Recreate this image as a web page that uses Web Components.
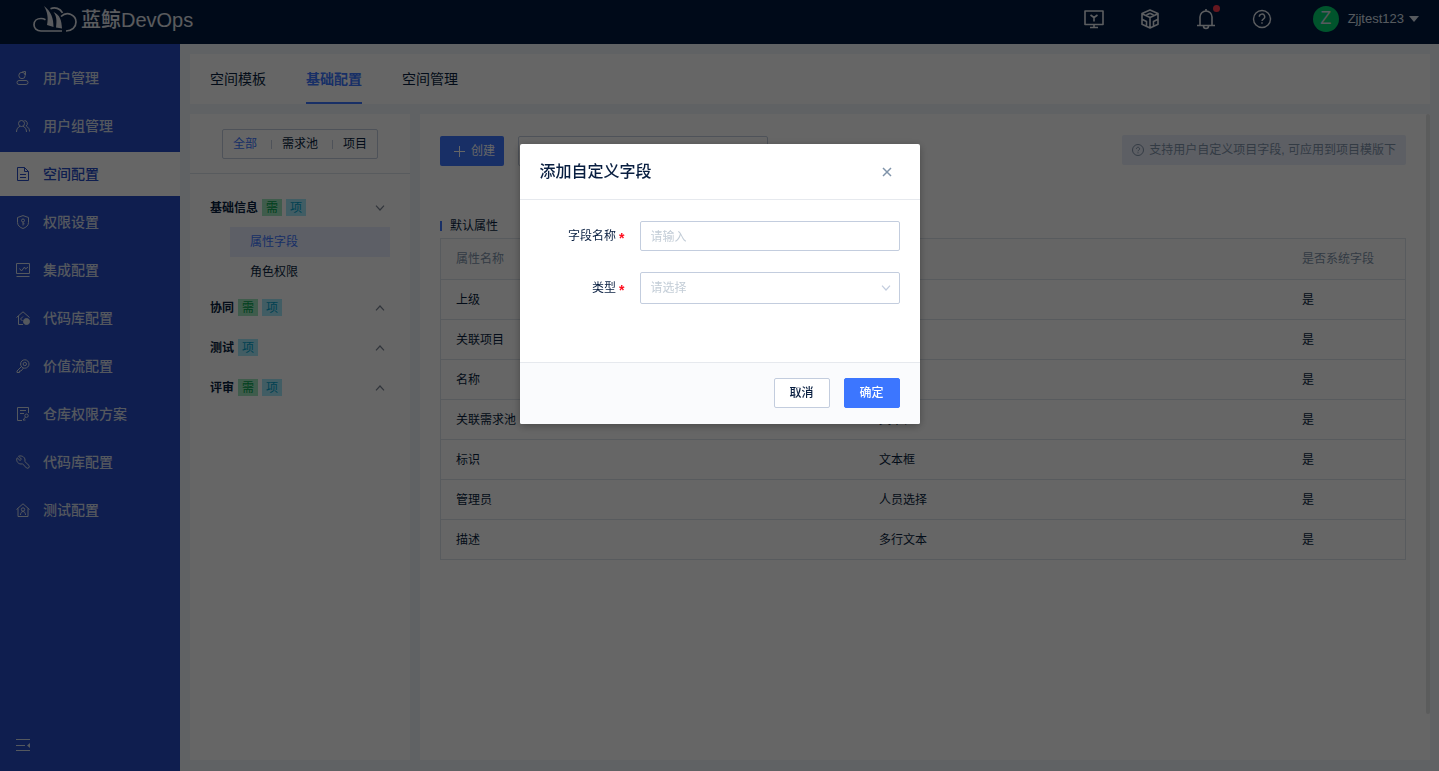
<!DOCTYPE html>
<html lang="zh-CN">
<head>
<meta charset="utf-8">
<title>蓝鲸DevOps</title>
<style>
html,body{margin:0;height:100%}
body{font-family:"Liberation Sans","Noto Sans CJK SC",sans-serif;font-size:12px;line-height:20px;color:#081e40;background:#f0f5fa;
--primary:#3c76ff;--line:#dde4eb;--muted:#8094aa;--field:#c3cdde}
</style>
</head>
<body>
<app-shell>
  <top-bar slot="top" user="Zjjtest123"></top-bar>
  <side-nav slot="side">
    <nav-item icon="user">用户管理</nav-item>
    <nav-item icon="group">用户组管理</nav-item>
    <nav-item icon="doc" active>空间配置</nav-item>
    <nav-item icon="shield">权限设置</nav-item>
    <nav-item icon="chart">集成配置</nav-item>
    <nav-item icon="home">代码库配置</nav-item>
    <nav-item icon="key">价值流配置</nav-item>
    <nav-item icon="plan">仓库权限方案</nav-item>
    <nav-item icon="wrench">代码库配置</nav-item>
    <nav-item icon="house">测试配置</nav-item>
  </side-nav>
  <tab-bar></tab-bar>
  <split-view>
    <group-panel slot="aside">
      <group-section label="基础信息" tags="需,项" open>
        <group-link active>属性字段</group-link>
        <group-link>角色权限</group-link>
      </group-section>
      <group-section label="协同" tags="需,项"></group-section>
      <group-section label="测试" tags="项"></group-section>
      <group-section label="评审" tags="需,项"></group-section>
    </group-panel>
    <field-panel><field-table></field-table></field-panel>
  </split-view>
</app-shell>
<modal-dialog heading="添加自定义字段">
  <form-row label="字段名称" for="text"></form-row>
  <form-row label="类型" for="select"></form-row>
</modal-dialog>

<script>
const define = (name, html, setup) => customElements.define(name, class extends HTMLElement {
  connectedCallback() {
    if (this.shadowRoot) return;
    const t = document.createElement('template');
    t.innerHTML = typeof html === 'function' ? html(this) : html;
    this.attachShadow({mode: 'open'}).append(t.content.cloneNode(true));
    if (setup) setup(this);
  }
});
const base = '*{box-sizing:border-box}button,input,select{font:inherit;color:inherit;margin:0}button{cursor:pointer;border:0;padding:0;background:none}a{color:inherit;text-decoration:none}svg{display:block;flex:none;fill:none;stroke:currentColor}';

const icons = {
  user: '<circle cx="6" cy="4.500" r="3.200"/><path d="M6 1.200C7 .5 8 .5 9.500.5V4M3 9.500h7a2 2 0 0 1 0 4H3a2 2 0 0 1 0-4z"/>',
  group: '<circle cx="5.500" cy="4.500" r="3"/><path d="M.5 13c0-3 1.500-5 3.500-5.700M7 7.300c2 .7 3.500 2.700 3.500 5.700M8.500 1.500a3 3 0 0 1 1.500 5.500M10.500 7.500c2 .8 3 2.500 3 5"/>',
  doc: '<path d="M1.500.5h7l4 4v9h-11zM8.500.5v4h4M4 7.500h6M4 10.500h6"/>',
  shield: '<path d="M7 .6 12.500 2.500v5c0 3-2.500 5-5.500 6-3-1-5.500-3-5.500-6v-5z"/><circle cx="7" cy="5.500" r="1.500"/><path d="M7 7v3.500M7 8.800h1.500"/>',
  chart: '<path d="M.5.500h13v10H.5zM.5 13.500h13M3.500 5.500l2 2.500 3-4 1 2 2.500-2"/>',
  home: '<path d="M.5 6.500 7 .8l6.500 5.700M2.500 5v8.500H7M7 5.500 4.500 8 6.500 10"/><circle cx="10.500" cy="10.500" r="3" fill="currentColor"/>',
  key: '<circle cx="8.800" cy="5" r="4.200"/><circle cx="8.800" cy="5" r="1.700"/><path d="M5.500 7.500 1 12v1.500h2.500v-1.500H5l2.500-3"/>',
  plan: '<path d="M12.500 6V.5h-11v13H6M4 3.500h6M4 6.500h4"/><circle cx="10.500" cy="8.700" r="1.700"/><path d="m9.500 10-2.500 3h2.500"/>',
  wrench: '<path d="M2.500 1.200 5.500 4.200 4 5.500 1.200 2.800C-.5 6 2.500 10 6.500 8.800l4 4.200c1.800 1 3.500-.8 2.500-2.500L8.800 6.500C10 2.500 6 0 2.500 1.200z"/>',
  house: '<path d="M.5 6.500 7 .8l6.500 5.700M2 5.500v8h10v-8"/><circle cx="7" cy="6.500" r="1.700"/><path d="M4.500 12c0-2 1-3.500 2.500-3.500S9.500 10 9.500 12"/>'
};

define('app-shell', `<style>${base}:host{display:flex;flex-direction:column;min-height:100vh}
.body{display:flex;flex:1}
main{flex:1;min-width:0;display:flex;flex-direction:column;gap:10px;padding:10px 9px 11px 10px}</style>
<slot name="top"></slot><div class="body"><slot name="side"></slot><main><slot></slot></main></div>`);

define('top-bar', el => `<style>${base}:host{display:block;background:#011a40;color:#fff}
header{display:flex;align-items:center;height:44px;padding:0 20px 6px 33px}
.logo{display:flex;align-items:center;gap:4px;font-size:20px;line-height:22px;color:#e0e4ea}
.logo span{padding-top:2px;font-weight:500}
nav{display:flex;align-items:center;gap:32px;margin-left:auto;color:#e6eaf0}
nav button{position:relative;width:24px;height:24px}
.dot{position:absolute;top:-2px;right:-2px;width:7px;height:7px;border-radius:50%;background:#ff3a4e}
.user{display:flex;align-items:center;gap:9px;margin-left:39px;font-size:13px;color:#d8e0ec}
.avatar{width:26px;height:26px;border-radius:50%;background:#00d26e;font-size:18px;line-height:25px;text-align:center}
.user svg{margin-left:-4px}
</style><header>
<a class="logo" href="#" aria-label="蓝鲸DevOps"><svg width="44" height="27" viewBox="0 0 44 27" stroke-width="1.700"><path d="M29 25H8C3.500 25 1 22 1 18.800c0-3.800 3-6.300 7-6.300 1.700 0 3.200.4 4.500 1.200"/><path d="M17.500 2.800c4.500-2 9.500-.5 12 4M28 10.500c3-3 7-3.500 10-2 3.500 1.500 5 4.500 5 7.500 0 5-4 9-10 9"/><path d="M11 0c3.500 6 4.500 12 3 19l6.500 2C20.500 13 18.500 5.500 11 0zM20.500 6c3 4 3.500 8 2.500 15.500l6 1C28.500 14 27 9 20.500 6z" fill="currentColor" stroke="none"/></svg><span>蓝鲸DevOps</span></a>
<nav>
<button aria-label="工作台"><svg width="24" height="24" viewBox="0 0 24 24" stroke-width="1.600" stroke-linejoin="round"><path d="M3 4h18v13.500H3zM12 17.500V21M8 20.500h8M8.500 8l3.500 2.500L15.500 8M12 10.500v4"/></svg></button>
<button aria-label="产品"><svg width="24" height="24" viewBox="0 0 24 24" stroke-width="1.600" stroke-linejoin="round"><path d="m12 3 8 3.500v10.800L12 21l-8-3.700V6.500zM4 6.800l8 3.700 8-3.700M12 10.500V21M12 6.200 15.500 8M8.500 8 12 6.200M4.500 12.500l4 2v4.500M19.500 12.500l-4 2v4.500"/></svg></button>
<button aria-label="通知"><svg width="24" height="24" viewBox="0 0 24 24" stroke-width="1.600"><path d="M3 18.500h18M6 18.500V10a6 6 0 0 1 12 0v8.500M12 2v2M9.500 19a2.500 2.500 0 0 0 5 0"/></svg><i class="dot"></i></button>
<button aria-label="帮助"><svg width="24" height="24" viewBox="0 0 24 24" stroke-width="1.400"><circle cx="12" cy="12" r="8.500"/><path d="M9.300 9.800a2.700 2.700 0 1 1 4 2.300c-1 .6-1.300 1-1.300 2M12 15.200v1.500"/></svg></button>
</nav>
<button class="user"><span class="avatar">Z</span><span>${el.getAttribute('user')}</span><svg width="10" height="6" viewBox="0 0 10 6"><path d="M0 0h10L5 6z" fill="currentColor" stroke="none"/></svg></button>
</header>`);

define('side-nav', `<style>${base}:host{display:flex;flex-direction:column;flex:none;width:180px;background:#264bc5;color:#d3dbea}
nav{display:flex;flex-direction:column;gap:4px;padding-top:12px;flex:1}
button{align-self:flex-start;padding:0 16px 19px}</style>
<nav><slot></slot></nav><button aria-label="收起"><svg width="14" height="14" viewBox="0 0 14 14"><path d="M0 1.500h14M0 7.500h9M0 12.500h14"/><path d="M14 5v5l-3-2.500z" fill="currentColor" stroke="none"/></svg></button>`);

define('nav-item', el => `<style>${base}:host{display:block}
a{display:flex;align-items:center;gap:13px;height:44px;padding:0 16px;font-size:14px;font-weight:500}
:host([active]) a{background:#fff;color:#264bc5}</style>
<a href="#"><svg width="14" height="14" viewBox="0 0 14 14">${icons[el.getAttribute('icon')]}</svg><slot></slot></a>`);

define('tab-bar', `<style>${base}:host{display:block;background:#fff}
nav{display:flex;gap:40px;padding:0 20px;font-size:14px}
a{height:50px;line-height:50px}
a[aria-current]{color:var(--primary);font-weight:700;border-bottom:2px solid}</style>
<nav><a href="#">空间模板</a><a href="#" aria-current="page">基础配置</a><a href="#">空间管理</a></nav>`);

define('split-view', `<style>${base}:host{display:flex;gap:10px;flex:1}
aside{flex:none;width:220px;background:#fff}section{flex:1;min-width:0;display:flex;background:#fff}</style>
<aside><slot name="aside"></slot></aside><section><slot></slot></section>`);

define('group-panel', `<style>${base}:host{display:block}
.filter{display:flex;justify-content:center;padding:15px 0 14px;border-bottom:1px solid var(--line)}
.seg{display:flex;align-items:center;height:30px;border:1px solid var(--field);border-radius:2px}
.seg button{padding:0 10px}
.seg i{width:1px;height:9px;background:var(--field);margin-left:4px}
.on{color:var(--primary)}
.list{padding:13px 20px}</style>
<div class="filter"><div class="seg"><button class="on">全部</button><i></i><button>需求池</button><i></i><button>项目</button></div></div>
<div class="list"><slot></slot></div>`);

define('group-section', el => `<style>${base}:host{display:block}
button{display:flex;align-items:center;gap:4px;width:100%;height:40px;padding:1px 5px 0 0}
b{font-weight:700}
.tag{width:20px;height:17px;line-height:18px;text-align:center}
.g{background:#9fe6bd;color:#00a04c}.b{background:#a3e8fa;color:#00a3cc}
svg{margin-left:auto;color:#7b8595}
.sub{padding-left:20px}</style>
<button aria-expanded="${el.hasAttribute('open')}"><b>${el.getAttribute('label')}</b>${el.getAttribute('tags').split(',').map(t => `<span class="tag ${t === '需' ? 'g' : 'b'}">${t}</span>`).join('')}<svg width="10" height="6" viewBox="0 0 10 6" stroke-width="1.200"><path d="${el.hasAttribute('open') ? 'M1 .7 5 5 9 .7' : 'M1 5.300 5 1l4 4.300'}"/></svg></button>
<div class="sub"><slot></slot></div>`);

define('group-link', `<style>${base}:host{display:block}
a{display:block;height:30px;line-height:30px;padding:0 20px}
:host([active]) a{background:#e9eefe;color:var(--primary)}</style><a href="#"><slot></slot></a>`);

define('field-panel', `<style>${base}:host{display:flex;flex:1;min-width:0}
.main{flex:1;min-width:0;padding:21px 20px 20px}
.tools{display:flex;align-items:flex-start;gap:14px}
.add{display:flex;align-items:center;gap:6px;height:30px;margin-top:1px;padding:0 9px 0 14px;border-radius:2px;background:var(--primary);color:#fff}
input{width:250px;height:30px;margin-top:1px;border:1px solid var(--field);border-radius:2px;padding:0 10px;outline:0;background:#fff}
.tip{display:flex;align-items:center;gap:5px;height:30px;margin-left:auto;padding:0 10px;border-radius:2px;background:#e9edfa;color:var(--muted)}
h2{display:flex;align-items:center;gap:8px;margin:50px 0 2px;font-size:12px;font-weight:400;line-height:20px}
h2::before{content:"";width:2px;height:10px;background:var(--primary)}
.bar{flex:none;width:4px;height:600px;border-radius:2px;background:#e4e5e6}</style>
<div class="main"><div class="tools"><button class="add"><svg width="11" height="11" viewBox="0 0 11 11"><path d="M5.500 0v11M0 5.500h11"/></svg>创建</button><input type="text" aria-label="搜索">
<div class="tip"><svg width="12" height="12" viewBox="0 0 12 12"><circle cx="6" cy="6" r="5.500"/><path d="M4.400 4.800a1.600 1.600 0 1 1 2.400 1.400c-.6.3-.8.600-.8 1.100M6 8.300v1"/></svg><span>支持用户自定义项目字段, 可应用到项目模版下</span></div></div>
<h2>默认属性</h2><slot></slot></div><div class="bar"></div>`);

const rows = [['上级', ''], ['关联项目', ''], ['名称', ''], ['关联需求池', '文本框'], ['标识', '文本框'], ['管理员', '人员选择'], ['描述', '多行文本']];
define('field-table', `<style>${base}:host{display:block;border:1px solid var(--line)}
table{width:100%;table-layout:fixed;border-spacing:0}
th,td{height:40px;padding:0 15px;text-align:left;font-weight:400;border-top:1px solid var(--line)}
th{border:0;color:var(--muted);background:#fcfcfd}
.last{width:118px}</style>
<table><thead><tr><th>属性名称</th><th></th><th class="last">是否系统字段</th></tr></thead>
<tbody>${rows.map(r => `<tr><td>${r[0]}</td><td>${r[1]}</td><td>是</td></tr>`).join('')}</tbody></table>`);

define('modal-dialog', el => `<style>${base}:host{position:fixed;inset:0;display:flex;justify-content:center;align-items:flex-start;padding-top:144px;background:rgba(0,0,0,.6)}
.box{width:400px;border-radius:2px;background:#fff;box-shadow:0 2px 8px rgba(0,0,0,.3);overflow:hidden}
header{display:flex;align-items:center;justify-content:space-between;height:56px;padding:0 28px 0 20px;border-bottom:1px solid #e6e9ee}
h1{margin:0;font-size:16px;font-weight:500;line-height:26px}
header svg{color:var(--muted)}
form{display:flex;flex-direction:column;gap:21px;min-height:162px;padding:21px 20px}
footer{display:flex;justify-content:flex-end;gap:14px;padding:15px 20px 16px;border-top:1px solid #e6e9ee;background:#fafbfd}
footer button{width:56px;height:30px;border:1px solid var(--field);border-radius:2px;background:#fff;font-weight:500}
footer .ok{background:var(--primary);border-color:var(--primary);color:#fff}</style>
<div class="box" role="dialog" aria-modal="true" aria-labelledby="t"><header><h1 id="t">${el.getAttribute('heading')}</h1><button aria-label="关闭"><svg width="10" height="10" viewBox="0 0 10 10" stroke-width="1.500"><path d="m1 1 8 8M9 1 1 9"/></svg></button></header>
<form><slot></slot></form><footer><button>取消</button><button class="ok">确定</button></footer></div>`);

define('form-row', el => `<style>${base}:host{display:flex;align-items:center}
label{flex:none;width:100px;padding-right:15px;text-align:right}
i{font-style:normal;font-weight:700;color:#ff0d1e;margin-left:3px;vertical-align:-3px;line-height:1;font-size:14px}
.ctl{position:relative;flex:1}
input,select{display:block;width:100%;height:30px;padding:0 10px;border:1px solid #c3cdde;border-radius:2px;background:#fff;outline:0;appearance:none}
input{padding-top:1px}
select{height:32px;color:#c3cdd7}
input::placeholder{color:#c3cdd7;opacity:1}
svg{position:absolute;right:9px;top:13px;color:#c3cdde;pointer-events:none}</style>
<label for="c">${el.getAttribute('label')}<i>*</i></label><div class="ctl">${el.getAttribute('for') === 'text'
 ? '<input id="c" type="text" placeholder="请输入">'
 : '<select id="c"><option>请选择</option></select><svg width="10" height="6" viewBox="0 0 10 6" stroke-width="1.200"><path d="M1 .7 5 5 9 .7"/></svg>'}</div>`);
</script>
</body>
</html>
